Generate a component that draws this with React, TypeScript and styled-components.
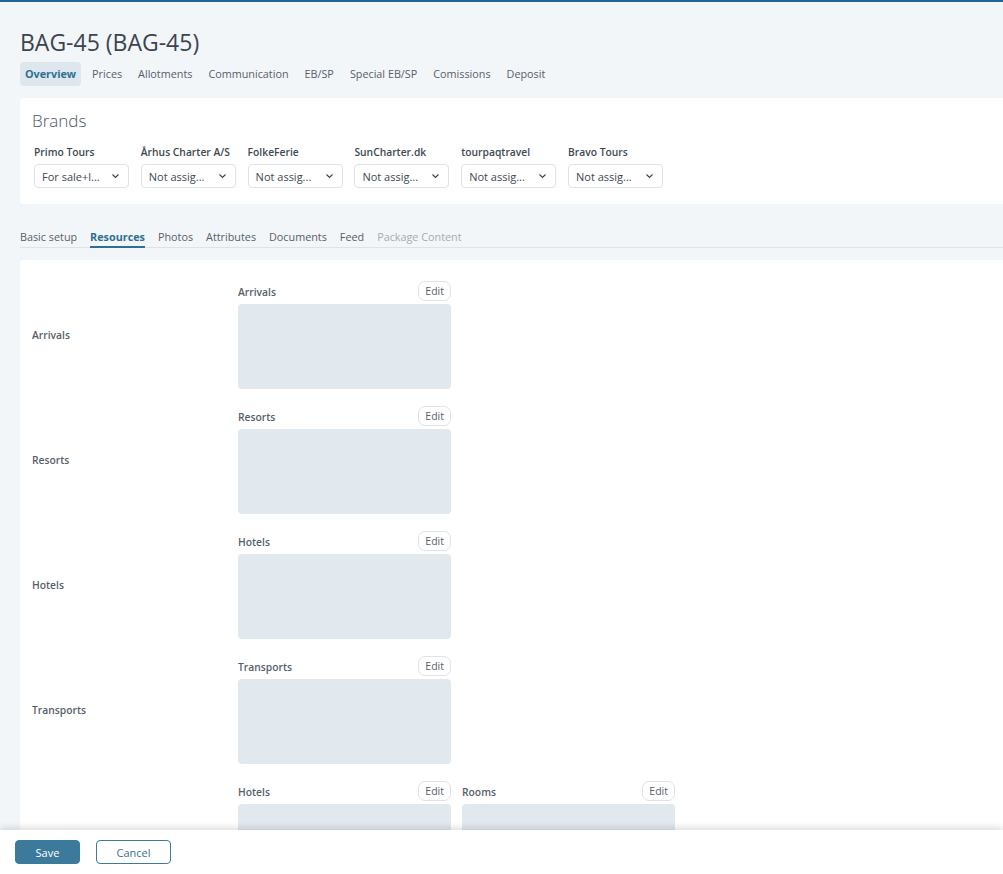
import React from "react";
import styled, { createGlobalStyle } from "styled-components";

const GlobalStyle = createGlobalStyle`
  html, body { margin: 0; padding: 0; }
  body {
    background: #f3f6f9;
    font-family: "Open Sans", "Noto Sans", sans-serif;
    color: #4e5a66;
    overflow: hidden;
  }
  * { box-sizing: border-box; }
`;

const Page = styled.div`
  border-top: 2px solid #1f6595;
  padding: 0 0 60px 20px;
  min-height: 874px;
`;

const Title = styled.h1`
  margin: 0;
  padding-top: 25px;
  font-size: 23px;
  font-weight: 400;
  color: #3a4550;
  line-height: 30px;
`;

const TabBar = styled.div`
  display: flex;
  gap: 6px;
  margin-top: 5px;
`;

const Tab = styled.div<{ $active?: boolean }>`
  padding: 0 5px;
  height: 24px;
  line-height: 24px;
  font-size: 10.8px;
  border-radius: 4px;
  color: ${(p) => (p.$active ? "#2f6f93" : "#56606a")};
  font-weight: ${(p) => (p.$active ? 700 : 400)};
  background: ${(p) => (p.$active ? "#dfe7ee" : "transparent")};
`;

const Card = styled.div`
  background: #fff;
  border-radius: 4px 0 0 4px;
  margin-top: 12px;
  padding: 12px 0 16px 12px;
`;

const CardTitle = styled.div`
  font-size: 17px;
  font-weight: 300;
  color: #4b5966;
  line-height: 22px;
`;

const BrandRow = styled.div`
  display: flex;
  gap: 11.8px;
  margin-top: 13px;
  padding-left: 2px;
`;

const Brand = styled.div`
  width: 95px;
  display: flex;
  flex-direction: column;
  gap: 5px;
`;

const BrandLabel = styled.div`
  font-size: 10.3px;
  font-weight: 600;
  color: #3e4852;
  white-space: nowrap;
  line-height: 14px;
`;

const Select = styled.div`
  height: 24px;
  border: 1px solid #dde3e9;
  border-radius: 4px;
  display: flex;
  align-items: center;
  justify-content: space-between;
  padding: 0 8px 0 7px;
  font-size: 11px;
  color: #3e4852;
`;

const SubTabs = styled.div`
  display: flex;
  gap: 13px;
  margin-top: 24px;
  border-bottom: 1px solid #dde3e9;
`;

const SubTab = styled.div<{ $active?: boolean; $disabled?: boolean }>`
  font-size: 10.8px;
  line-height: 17px;
  padding-bottom: 1px;
  color: ${(p) => (p.$active ? "#2f6f93" : p.$disabled ? "#a4abb2" : "#56606a")};
  font-weight: ${(p) => (p.$active ? 700 : 400)};
  border-bottom: 2px solid ${(p) => (p.$active ? "#2f6f93" : "transparent")};
  margin-bottom: -1px;
`;

const ContentCard = styled.div`
  background: #fff;
  border-radius: 4px 0 0 0;
  margin-top: 12px;
  padding: 21px 0 0 12px;
  display: flex;
  flex-direction: column;
  gap: 17px;
`;

const ResourceRow = styled.div`
  display: grid;
  grid-template-columns: 206px auto;
  align-items: center;
`;

const RowLabel = styled.div`
  font-size: 10.3px;
  font-weight: 600;
  color: #56606a;
  margin-top: -1px;
`;

const Fields = styled.div`
  display: flex;
  gap: 11px;
`;

const Field = styled.div`
  width: 213px;
  display: flex;
  flex-direction: column;
  gap: 3px;
`;

const FieldHead = styled.div`
  display: flex;
  justify-content: space-between;
  align-items: center;
  height: 20px;
`;

const FieldLabel = styled.div`
  font-size: 10.3px;
  font-weight: 600;
  color: #56606a;
  line-height: 14px;
  padding-top: 2px;
`;

const EditButton = styled.button`
  height: 20px;
  padding: 0 6px;
  border: 1px solid #dde3e9;
  border-radius: 7px;
  background: #fff;
  font-family: inherit;
  font-size: 10.5px;
  color: #56606a;
  line-height: 18px;
`;

const Box = styled.div`
  height: 85px;
  background: #e1e8ee;
  border-radius: 4px;
`;

const Footer = styled.div`
  position: fixed;
  left: 0;
  right: 0;
  bottom: 0;
  height: 44px;
  background: #fff;
  box-shadow: 0 -3px 6px rgba(0, 0, 0, 0.12);
  display: flex;
  align-items: center;
  gap: 16px;
  padding-left: 15px;
`;

const Btn = styled.button<{ $primary?: boolean }>`
  height: 24px;
  width: ${(p) => (p.$primary ? "65px" : "75px")};
  border-radius: 4px;
  border: 1px solid #3b7a9b;
  background: ${(p) => (p.$primary ? "#3b7a9b" : "#fff")};
  color: ${(p) => (p.$primary ? "#fff" : "#3b6f8c")};
  font-family: inherit;
  font-size: 11px;
`;

const Chevron = () => (
  <svg width="9" height="6" viewBox="0 0 9 6" fill="none">
    <path d="M1.5 1.5 L4.5 4.5 L7.5 1.5" stroke="#3e4852" strokeWidth="1.2" />
  </svg>
);

const brands = [
  ["Primo Tours", "For sale+l..."],
  ["Århus Charter A/S", "Not assig..."],
  ["FolkeFerie", "Not assig..."],
  ["SunCharter.dk", "Not assig..."],
  ["tourpaqtravel", "Not assig..."],
  ["Bravo Tours", "Not assig..."],
];

const rows: [string, string[]][] = [
  ["Arrivals", ["Arrivals"]],
  ["Resorts", ["Resorts"]],
  ["Hotels", ["Hotels"]],
  ["Transports", ["Transports"]],
  ["", ["Hotels", "Rooms"]],
];

export default function App() {
  return (
    <>
      <GlobalStyle />
      <Page>
        <Title>BAG-45 (BAG-45)</Title>
        <TabBar>
          <Tab $active>Overview</Tab>
          <Tab>Prices</Tab>
          <Tab>Allotments</Tab>
          <Tab>Communication</Tab>
          <Tab>EB/SP</Tab>
          <Tab>Special EB/SP</Tab>
          <Tab>Comissions</Tab>
          <Tab>Deposit</Tab>
        </TabBar>
        <Card>
          <CardTitle>Brands</CardTitle>
          <BrandRow>
            {brands.map(([name, val]) => (
              <Brand key={name}>
                <BrandLabel>{name}</BrandLabel>
                <Select>
                  <span>{val}</span>
                  <Chevron />
                </Select>
              </Brand>
            ))}
          </BrandRow>
        </Card>
        <SubTabs>
          <SubTab>Basic setup</SubTab>
          <SubTab $active>Resources</SubTab>
          <SubTab>Photos</SubTab>
          <SubTab>Attributes</SubTab>
          <SubTab>Documents</SubTab>
          <SubTab>Feed</SubTab>
          <SubTab $disabled>Package Content</SubTab>
        </SubTabs>
        <ContentCard>
          {rows.map(([label, fields], i) => (
            <ResourceRow key={i}>
              <RowLabel>{label}</RowLabel>
              <Fields>
                {fields.map((f) => (
                  <Field key={f}>
                    <FieldHead>
                      <FieldLabel>{f}</FieldLabel>
                      <EditButton>Edit</EditButton>
                    </FieldHead>
                    <Box />
                  </Field>
                ))}
              </Fields>
            </ResourceRow>
          ))}
        </ContentCard>
      </Page>
      <Footer>
        <Btn $primary>Save</Btn>
        <Btn>Cancel</Btn>
      </Footer>
    </>
  );
}
